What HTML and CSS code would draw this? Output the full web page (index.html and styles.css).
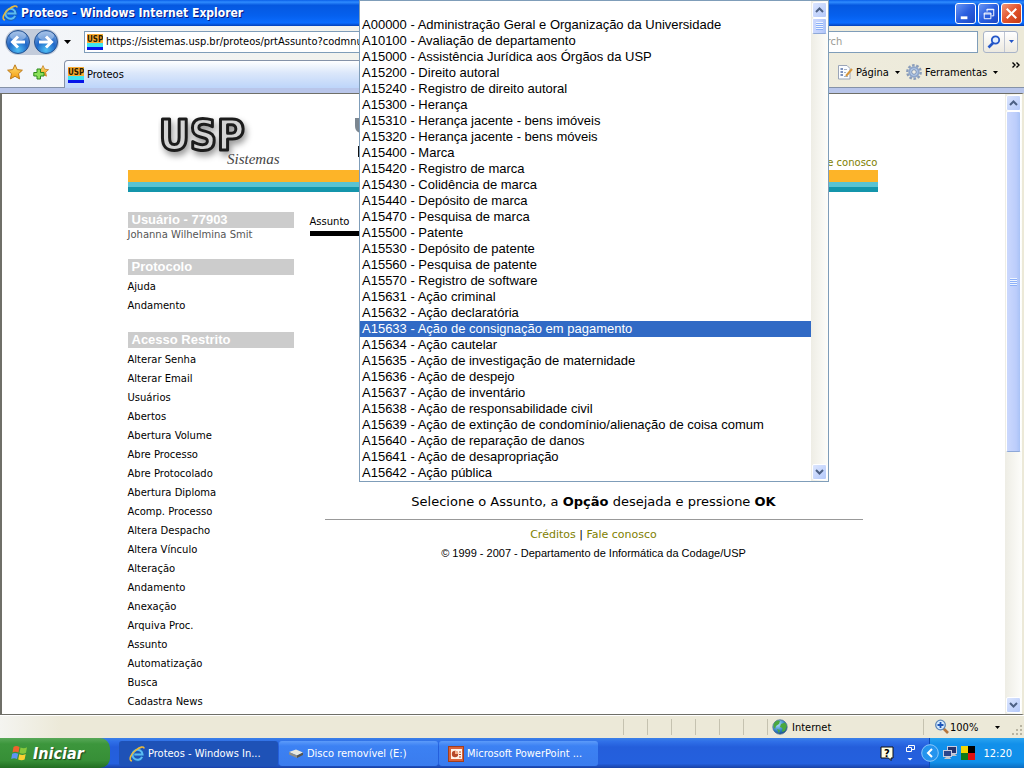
FILE: index.html
```html
<!DOCTYPE html>
<html lang="pt-BR">
<head>
<meta charset="utf-8">
<title>Proteos - Windows Internet Explorer</title>
<link rel="stylesheet" href="styles.css">
</head>
<body>
<svg class="defs" width="0" height="0" aria-hidden="true">
  <defs>
    <radialGradient id="orb" cx="50%" cy="85%" r="85%"><stop offset="0" stop-color="#4fc0f5"/><stop offset=".5" stop-color="#2068c8"/><stop offset="1" stop-color="#7da6dc"/></radialGradient>
    <linearGradient id="gold" x1="0" y1="0" x2="0" y2="1"><stop offset="0" stop-color="#ffe27a"/><stop offset="1" stop-color="#f49a0c"/></linearGradient>
    <radialGradient id="sea" cx="35%" cy="30%" r="80%"><stop offset="0" stop-color="#b5e4fb"/><stop offset=".6" stop-color="#2f80c8"/><stop offset="1" stop-color="#123e78"/></radialGradient>
    <symbol id="ie" viewBox="0 0 16 16">
      <path d="M13.3 10.8A5.2 5.2 0 1 1 13.6 8.6H5.3" fill="none" stroke="#1b5fb8" stroke-width="3.4"/>
      <path d="M13.1 10.8A5 5 0 1 1 13.5 8.4H5.3" fill="none" stroke="#5bbcf2" stroke-width="2"/>
      <path d="M3 15C-1 14 2 8 7 4C11 .8 15 0 15 2.6" fill="none" stroke="#e9b93c" stroke-width="1.6"/>
    </symbol>
    <symbol id="usp" viewBox="0 0 16 16">
      <rect width="16" height="9" fill="#fbac32"/><rect y="9" width="16" height="4" fill="#3fe4f0"/><rect y="13" width="16" height="3" fill="#0614e8"/>
      <text x="0" y="8" class="fav-text">USP</text>
    </symbol>
    <symbol id="star" viewBox="0 0 16 16"><path d="M8 .8L10.2 5.6L15.4 6.2L11.5 9.7L12.6 14.9L8 12.3L3.4 14.9L4.5 9.7L.6 6.2L5.8 5.6Z" fill="url(#gold)" stroke="#bd7a1c"/></symbol>
  </defs>
</svg>

<div class="desktop">
  <header class="titlebar">
    <svg class="i16" viewBox="0 0 16 16"><use href="#ie"/></svg>
    <h1>Proteos - Windows Internet Explorer</h1>
    <div class="caption-buttons">
      <button aria-label="Minimizar"><svg viewBox="0 0 20 20"><path d="M5 14.5H12" stroke="#fff" stroke-width="3"/></svg></button>
      <button aria-label="Restaurar"><svg viewBox="0 0 20 20" fill="none" stroke="#fff"><path d="M8.5 8V5.5H15.5V12.5H13M8 6H16"/><path d="M5.500 9.500H12.500V15.500H5.500ZM5 10.500H13"/></svg></button>
      <button class="close" aria-label="Fechar"><svg viewBox="0 0 20 20"><path d="M5 5L15 15M15 5L5 15" stroke="#fff" stroke-width="2.200"/></svg></button>
    </div>
  </header>

  <nav class="navbar">
    <div class="history">
      <button aria-label="Voltar"><svg viewBox="0 0 26 26"><circle cx="13" cy="13" r="11.500" fill="url(#orb)" stroke="#27528f"/><ellipse cx="13" cy="7" rx="8" ry="4.500" fill="#fff" opacity=".35"/><path d="M20 13H8M13 7.500L7.500 13L13 18.500" fill="none" stroke="#fff" stroke-width="3"/></svg></button>
      <button aria-label="Avançar"><svg viewBox="0 0 26 26"><circle cx="13" cy="13" r="11.500" fill="url(#orb)" stroke="#27528f"/><ellipse cx="13" cy="7" rx="8" ry="4.500" fill="#fff" opacity=".35"/><path d="M6 13H18M13 7.500L18.500 13L13 18.500" fill="none" stroke="#fff" stroke-width="3"/></svg></button>
    </div>
    <button class="caret" aria-label="Páginas recentes"><svg viewBox="0 0 7 4"><path d="M0 0H7L3.500 4Z"/></svg></button>
    <div class="address">
      <svg class="i16" viewBox="0 0 16 16"><use href="#usp"/></svg>
      <input type="text" aria-label="Endereço" value="https://sistemas.usp.br/proteos/prtAssunto?codmnu">
    </div>
    <input class="search" type="text" aria-label="Pesquisar" placeholder="Live Search">
    <div class="search-buttons">
      <button aria-label="Pesquisar"><svg width="14" height="14" viewBox="0 0 14 14" fill="none" stroke="#2456c8"><circle cx="8.500" cy="5" r="3.700" stroke-width="1.800" fill="#e4f0ff"/><path d="M6 8L1.500 12.500" stroke-width="2.600"/></svg></button>
      <button aria-label="Opções de pesquisa"><svg width="5" height="3" viewBox="0 0 5 3"><path d="M0 0H5L2.500 3Z" fill="#2456c8"/></svg></button>
    </div>
  </nav>

  <div class="tabbar">
    <div class="favorites">
      <button aria-label="Favoritos"><svg class="i16" viewBox="0 0 16 16"><use href="#star"/></svg></button>
      <button aria-label="Adicionar a Favoritos"><svg class="i16" viewBox="0 0 16 16"><svg x="4" width="12" height="14"><use href="#star" width="12" height="14"/></svg><path d="M4 5H7.500V8.500H11V12H7.500V15H4V12H.8V8.500H4Z" fill="#8be05a" stroke="#2c8a1c"/></svg></button>
    </div>
    <button class="tab"><svg class="i16" viewBox="0 0 16 16"><use href="#usp"/></svg>Proteos</button>
    <div class="commands">
      <button><svg class="i16" viewBox="0 0 16 16"><path d="M1.500 1.500H10L13 4.500V15H1.500Z" fill="#fafcff" stroke="#9aa5b8"/><path d="M3.500 5H6M3.500 8H6M3.500 11H6" stroke="#546fa8" stroke-width="1.500"/><path d="M7 5.500H10M7 8.500H9M7 12.500H11" stroke="#a5b2c8"/><path d="M15 5L9 12" stroke="#d6953a" stroke-width="2"/></svg>Página<svg class="arrow" viewBox="0 0 5 3"><path d="M0 0H5L2.500 3Z"/></svg></button>
      <button><svg class="i16" viewBox="0 0 16 16"><circle cx="8" cy="8" r="6.700" fill="none" stroke="#8a9dba" stroke-width="2.400" stroke-dasharray="2.600 1.600"/><circle cx="8" cy="8" r="4.700" fill="#b5ccec" stroke="#8fa6ca" stroke-width="2"/><circle cx="8" cy="8" r="2.300" fill="#f0eee4" stroke="#7b90b2"/></svg>Ferramentas<svg class="arrow" viewBox="0 0 5 3"><path d="M0 0H5L2.500 3Z"/></svg></button>
      <button class="more" aria-label="Mais comandos"><svg width="8" height="6" viewBox="0 0 8 6"><path d="M.5 .5L3 3L.5 5.500M4.500 .5L7 3L4.500 5.500" fill="none" stroke="#000" stroke-width="1.400"/></svg></button>
    </div>
  </div>

  <div class="viewport">
    <main class="page">
      <div class="site">
        <div class="site-header">
          <svg class="logo" width="240" height="76" viewBox="0 0 240 76" role="img" aria-label="USP Sistemas">
            <text class="logo-usp" x="1" y="56">USP</text>
            <text class="logo-sub" x="69" y="70">Sistemas</text>
            <path d="M197 24H204V40L200 38Q197 36 197 32Z" fill="#7b8690"/><rect x="200" y="52" width="4" height="11" fill="#111"/>
          </svg>
          <a class="contact" href="#fale">Fale conosco</a>
        </div>
        <div class="stripes"></div>
        <div class="columns">
          <aside>
            <section><h2>Usuário - 77903</h2><p>Johanna Wilhelmina Smit</p></section>
            <section><h2>Protocolo</h2>
              <ul><li><a href="#a">Ajuda</a></li><li><a href="#a">Andamento</a></li></ul></section>
            <section><h2>Acesso Restrito</h2>
              <ul>
                <li><a href="#a">Alterar Senha</a></li><li><a href="#a">Alterar Email</a></li><li><a href="#a">Usuários</a></li><li><a href="#a">Abertos</a></li><li><a href="#a">Abertura Volume</a></li><li><a href="#a">Abre Processo</a></li><li><a href="#a">Abre Protocolado</a></li><li><a href="#a">Abertura Diploma</a></li><li><a href="#a">Acomp. Processo</a></li><li><a href="#a">Altera Despacho</a></li><li><a href="#a">Altera Vínculo</a></li><li><a href="#a">Alteração</a></li><li><a href="#a">Andamento</a></li><li><a href="#a">Anexação</a></li><li><a href="#a">Arquiva Proc.</a></li><li><a href="#a">Assunto</a></li><li><a href="#a">Automatização</a></li><li><a href="#a">Busca</a></li><li><a href="#a">Cadastra News</a></li>
              </ul></section>
          </aside>
          <div class="content">
            <label class="field-title" for="assunto">Assunto</label>
            <p class="hint">Selecione o Assunto, a <b>Opção</b> desejada e pressione <b>OK</b></p>
            <footer>
              <div class="links"><a href="#c">Créditos</a> | <a href="#fale">Fale conosco</a></div>
              <div class="copy">© 1999 - 2007 - Departamento de Informática da Codage/USP</div>
            </footer>
          </div>
        </div>
      </div>
    </main>
    <div class="scrollbar page-scroll" aria-hidden="true">
      <span class="sb-btn"><svg viewBox="0 0 9 6"><path d="M1 5L4.500 1.500L8 5"/></svg></span>
      <span class="sb-thumb"><i></i></span>
      <span class="sb-track"></span>
      <span class="sb-btn"><svg viewBox="0 0 9 6"><path d="M1 1L4.500 4.500L8 1"/></svg></span>
    </div>
  </div>

  <div class="statusbar">
    <span></span><span></span><span></span><span></span><span></span><span></span>
    <div class="zone"><svg class="i16" viewBox="0 0 16 16"><circle cx="8" cy="8" r="7.200" fill="url(#sea)" stroke="#4b6f96" stroke-width=".8"/><path d="M3 3Q6 .8 8 2L7 5L4 7L3 10Q1 8 1.500 5.500ZM9 5L13 3.500L15 7L13 12L10 13L10.500 9L8 8ZM5 10L8 11L7 14.500Z" fill="#49a83e"/></svg>Internet</div>
    <button class="zoom"><svg class="i16" viewBox="0 0 16 16"><path d="M9 9L14 14" stroke="#b5763c" stroke-width="2.600"/><circle cx="6.500" cy="6" r="4.800" fill="#d7ecff" stroke="#5d86b8" stroke-width="1.300"/><path d="M6.500 3V9M3.500 6H9.500" stroke="#1d55b8" stroke-width="1.800"/></svg><b>100%</b><svg class="arrow" viewBox="0 0 5 3"><path d="M0 0H5L2.500 3Z"/></svg></button>
    <svg class="grip" viewBox="0 0 12 12" fill="#b8b4a2"><path d="M9 1h2v2h-2zM9 5h2v2h-2zM5 5h2v2h-2zM9 9h2v2h-2zM5 9h2v2h-2zM1 9h2v2h-2z"/></svg>
  </div>

  <footer class="taskbar">
    <button class="start"><svg width="20" height="20" viewBox="0 0 20 20"><path d="M3.500 4Q6 2 9.500 4L8.500 9.500Q5 7.800 2.500 9.500Z" fill="#f0622d"/><path d="M10.500 4.500Q14 6 17 4.200L16 9.800Q13 11.500 9.500 10Z" fill="#86c83c"/><path d="M2.200 10.800Q5 9 8.200 10.800L7 16Q4 14.400 1.200 16Z" fill="#5d94f4"/><path d="M9.300 11.200Q12.500 12.800 15.700 11L14.600 16.500Q11.500 18 8.200 16.400Z" fill="#fbd032"/></svg>Iniciar</button>
    <div class="tasks">
      <button class="task active"><svg class="i16" viewBox="0 0 16 16"><use href="#ie"/></svg><span>Proteos - Windows In...</span></button>
      <button class="task"><svg class="i16" viewBox="0 0 16 16"><path d="M1 6L8 3.500L15 6.500L9 9.500Z" fill="#e8e8e0"/><path d="M1 6L9 9.500V12L1 8.500Z" fill="#8e8e88"/><path d="M9 9.500L15 6.500V9L9 12Z" fill="#55554f"/></svg><span>Disco removível (E:)</span></button>
      <button class="task"><svg class="i16" viewBox="0 0 16 16"><rect x=".5" y=".5" width="15" height="15" fill="#d9633b" stroke="#a33d1c"/><rect x="3" y="3" width="11" height="10" fill="#fff3ea"/><circle cx="7" cy="8" r="3.200" fill="#b5482a"/><path d="M7 8V4.800A3.200 3.200 0 0 1 10.200 8Z" fill="#f5b08c"/><path d="M11 6H13M11 8.500H13M11 11H13" stroke="#b5482a"/></svg><span>Microsoft PowerPoint ...</span></button>
    </div>
    <div class="langbar">
      <svg width="14" height="15" viewBox="0 0 14 15"><path d="M1 1H13V12H11V14.500L8.500 12H1Z" fill="#ffffe6" stroke="#111"/><text x="4" y="11" class="help-text">?</text></svg>
      <svg width="10" height="17" viewBox="0 0 10 17" fill="none" stroke="#fff"><path d="M3.500 2.500V.5H9.500V4.500H7"/><path d="M1.500 2.500H6.500V6.500H1.500Z"/><path d="M2.500 13H7.500L5 15.500Z" fill="#fff" stroke="none"/></svg>
    </div>
    <div class="tray">
      <button class="expand" aria-label="Mostrar ícones ocultos"><svg width="18" height="18" viewBox="0 0 18 18"><circle cx="9" cy="9" r="8.300" fill="#2494ee" stroke="#8cc8fa"/><path d="M11 5L7 9L11 13" fill="none" stroke="#fff" stroke-width="2"/></svg></button>
      <svg class="i16" viewBox="0 0 16 16"><g stroke="#c8cce0"><rect x="5.500" y="1.500" width="9" height="7" fill="#24346e"/><rect x="1.500" y="5.500" width="8" height="6" fill="#2c458c"/></g><path d="M2 14H9L8 12H4ZM10 11H15L13 9H10Z" fill="#c0c4cc"/></svg>
      <svg width="14" height="14" viewBox="0 0 14 14"><rect width="7" height="7" fill="#f4d500"/><rect x="7" width="7" height="7" fill="#000"/><rect y="7" width="7" height="7" fill="#107a18"/><rect x="7" y="7" width="7" height="7" fill="#e01010"/></svg>
      <time>12:20</time>
    </div>
  </footer>
</div>

<div class="dropdown">
  <select id="assunto" size="30">
    <option></option>
    <option>A00000 - Administração Geral e Organização da Universidade</option>
    <option>A10100 - Avaliação de departamento</option>
    <option>A15000 - Assistência Jurídica aos Órgãos da USP</option>
    <option>A15200 - Direito autoral</option>
    <option>A15240 - Registro de direito autoral</option>
    <option>A15300 - Herança</option>
    <option>A15310 - Herança jacente - bens imóveis</option>
    <option>A15320 - Herança jacente - bens móveis</option>
    <option>A15400 - Marca</option>
    <option>A15420 - Registro de marca</option>
    <option>A15430 - Colidência de marca</option>
    <option>A15440 - Depósito de marca</option>
    <option>A15470 - Pesquisa de marca</option>
    <option>A15500 - Patente</option>
    <option>A15530 - Depósito de patente</option>
    <option>A15560 - Pesquisa de patente</option>
    <option>A15570 - Registro de software</option>
    <option>A15631 - Ação criminal</option>
    <option>A15632 - Ação declaratória</option>
    <option selected>A15633 - Ação de consignação em pagamento</option>
    <option>A15634 - Ação cautelar</option>
    <option>A15635 - Ação de investigação de maternidade</option>
    <option>A15636 - Ação de despejo</option>
    <option>A15637 - Ação de inventário</option>
    <option>A15638 - Ação de responsabilidade civil</option>
    <option>A15639 - Ação de extinção de condomínio/alienação de coisa comum</option>
    <option>A15640 - Ação de reparação de danos</option>
    <option>A15641 - Ação de desapropriação</option>
    <option>A15642 - Ação pública</option>
  </select>
  <div class="scrollbar" aria-hidden="true">
    <span class="sb-btn"><svg viewBox="0 0 9 6"><path d="M1 5L4.500 1.500L8 5"/></svg></span>
    <span class="sb-thumb small"><i></i></span>
    <span class="sb-track"></span>
    <span class="sb-btn"><svg viewBox="0 0 9 6"><path d="M1 1L4.500 4.500L8 1"/></svg></span>
  </div>
</div>
</body>
</html>
```
FILE: styles.css
```css
* { box-sizing: border-box; }
body { margin: 0; font: 11px "DejaVu Sans Condensed", "DejaVu Sans", sans-serif; color: #000; }
h1, h2, p, ul { margin: 0; padding: 0; }
ul { list-style: none; }
a { color: inherit; text-decoration: none; }
button { font: inherit; color: inherit; padding: 0; border: 0; background: none; }
svg { display: block; flex: none; }
.defs { position: absolute; }
.i16 { width: 16px; height: 16px; }
.arrow { width: 5px; height: 3px; }
.fav-text { font: bold 8px "DejaVu Sans Condensed", sans-serif; fill: #2a1a00; }
.help-text { font: bold 11px "DejaVu Sans Condensed", sans-serif; fill: #000; }

.desktop { display: flex; flex-direction: column; height: 100vh; overflow: hidden; }

.titlebar { display: flex; align-items: center; gap: 3px; height: 26px; padding: 0 2px; background: linear-gradient(#0a5fe8, #2f8cff 8%, #0558e0 20%, #0560ee 60%, #0a6cff 88%, #0340b8); }
.titlebar h1 { font: bold 12px "DejaVu Sans Condensed", sans-serif; color: #fff; text-shadow: 1px 1px #0a1883; }
.caption-buttons { display: flex; gap: 2px; margin-left: auto; }
.caption-buttons button { width: 21px; height: 21px; border: 1px solid #fff; border-radius: 3px; background: linear-gradient(135deg, #6a96f4, #2a5fe0 50%, #1d48c4); }
.caption-buttons .close { background: linear-gradient(135deg, #f0977a, #e2532c 50%, #c43a14); }

.navbar { display: flex; align-items: center; height: 31px; padding: 0 6px 0 5px; background: linear-gradient(90deg, #f3f6fb, #f1efe3 60%, #ece9d8); }
.history { display: flex; gap: 2px; background: #c3ccdb; border-radius: 13px; }
.history svg { width: 26px; height: 26px; }
.caret { margin: 0 13px 0 5px; }
.caret svg { width: 7px; height: 4px; }
.address { display: flex; align-items: center; gap: 3px; flex: 1; height: 22px; padding-left: 2px; border: 1px solid #7f9db9; background: #fff; }
.address input { flex: 1; min-width: 0; border: 0; padding: 0; font: inherit; outline: 0; }
.search { width: 196px; height: 22px; margin-left: 6px; padding: 0 2px; border: 1px solid #7f9db9; background: #fff; font: inherit; }
.search::placeholder { color: #9a9a94; }
.search-buttons { display: flex; height: 22px; margin-left: 5px; border: 1px solid #a9b4c8; border-radius: 3px; background: linear-gradient(#fff, #ece9e0); }
.search-buttons button { display: grid; place-items: center; width: 20px; }
.search-buttons button + button { width: 13px; border-left: 1px solid #c0c6d2; }

.tabbar { display: flex; height: 36px; border-bottom: 5px solid #b9c6ea; background: linear-gradient(90deg, #f3f6fb, #f1efe3 60%, #ece9d8); }
.favorites { display: flex; align-items: center; gap: 10px; width: 64px; padding-left: 7px; border-bottom: 1px solid #8592a8; }
.tab { display: flex; align-items: center; gap: 3px; flex: 1; margin: 3px 0 0; padding-left: 3px; border: 1px solid #8592a8; border-bottom: 0; border-radius: 4px 4px 0 0; background: linear-gradient(#fff, #dbe7fa 45%, #bdd5fa); text-align: left; }
.commands { display: flex; align-items: center; gap: 6px; width: 196px; padding-left: 9px; border-bottom: 1px solid #8592a8; }
.commands button { display: flex; align-items: center; gap: 3px; white-space: nowrap; }
.commands .arrow { margin-left: 3px; }
.commands .more { margin: 0 4px 14px auto; }

.viewport { display: flex; flex: 1; min-height: 0; border: 1px solid #6f6f68; border-width: 1px 2px 1px 2px; border-right-color: #ece9d8; background: #fff; }
.page { flex: 1; padding-right: 2px; overflow: hidden; }
.site { max-width: 750px; margin: 0 auto; font-family: "DejaVu Sans", sans-serif; }
.site-header { display: flex; justify-content: space-between; align-items: flex-end; height: 76px; }
.logo { margin: 0 0 0 30px; }
.logo-usp { font: bold 42px "DejaVu Sans Condensed", sans-serif; fill: #d4d4d4; stroke: #1c1c1c; stroke-width: 3px; stroke-linejoin: round; filter: drop-shadow(2px 4px 3px rgba(0, 0, 0, .4)); }
.logo-sub { font: italic 15px "Liberation Serif", serif; fill: #444; }
.contact { font-size: 10px; line-height: 14px; color: #808000; }
.stripes { height: 22px; background: linear-gradient(#fdb428 12px, #5ac3d2 12px 17px, #1495ab 17px); }
.columns { display: flex; gap: 16px; padding-top: 20px; }
aside { display: flex; flex-direction: column; gap: 17px; width: 166px; flex: none; font-size: 10px; }
aside h2 { height: 16px; padding-left: 4px; background: #ccc; color: #fff; font: bold 13px/16px "Liberation Sans", sans-serif; }
aside p { line-height: 14px; color: #555; white-space: nowrap; }
aside ul { padding-top: 2px; }
aside li { line-height: 19px; }
.content { flex: 1; text-align: center; }
.field-title { display: block; width: 80%; height: 24px; border-bottom: 5px solid #000; font-size: 10px; line-height: 20px; text-align: left; }
.hint { margin-top: 257px; font-size: 13px; line-height: 18px; }
footer .links, footer .copy { line-height: 18px; }
.content footer { margin: 8px 15px 0; padding-top: 6px; border-top: 1px solid #999; }
.links { font-size: 11px; }
.links a { color: #808000; }
.copy { font-family: "Liberation Sans", sans-serif; font-size: 11px; }

.scrollbar { display: flex; flex-direction: column; width: 17px; padding: 1px; background: linear-gradient(90deg, #eeede5, #fdfdfa); }
.sb-btn { display: grid; place-items: center; height: 16px; flex: none; border: 1px solid #fff; border-radius: 2px; background: linear-gradient(135deg, #dbe5fe, #b4c9fa); }
.sb-btn svg { width: 9px; height: 6px; fill: none; stroke: #4d6185; stroke-width: 2; }
.sb-thumb { display: grid; place-items: center; flex: 340 0 0; border: 1px solid #fff; border-bottom-color: #8ea8d8; border-radius: 2px; background: linear-gradient(90deg, #cbd8fd, #bccdfb 70%, #a9c2f6); }
.sb-thumb.small { flex: none; height: 16px; }
.sb-thumb i { width: 7px; height: 8px; background: repeating-linear-gradient(#eef4fe 0 1px, #8cb0f8 1px 2px); }
.sb-track { flex: 245 0 0; }

.statusbar { display: flex; align-items: stretch; height: 23px; padding: 3px 0; border-top: 1px solid #fff; background: linear-gradient(90deg, #f4f4f0, #ece9d8 6%, #ece9d8); }
.statusbar > span { width: 24px; border-left: 1px solid #c5c2b0; }
.statusbar > span:first-child { margin-left: auto; }
.zone { display: flex; align-items: center; gap: 4px; width: 156px; padding-left: 4px; border-left: 1px solid #c5c2b0; }
.zoom { display: flex; align-items: center; width: 77px; padding-left: 10px; border-left: 1px solid #c5c2b0; }
.zoom b { font-weight: normal; }
.zoom .arrow { margin-left: auto; }
.grip { width: 12px; height: 12px; margin: 5px 1px 0 11px; }

.taskbar { display: flex; height: 30px; color: #fff; background: linear-gradient(#3a80e8, #2f6fe8 12%, #245edb 30%, #2460de 85%, #1941a5); }
.start { display: flex; align-items: center; gap: 3px; width: 110px; padding-left: 10px; border-radius: 0 10px 10px 0; background: linear-gradient(#58a858, #3c963c 20%, #378f37 75%, #226e22); font: italic bold 16px "DejaVu Sans Condensed", sans-serif; text-shadow: 1px 1px 1px #1a421a; }
.tasks { display: flex; gap: 1px; flex: 1; margin-left: 9px; padding: 3px 0 2px; }
.task { display: flex; align-items: center; gap: 3px; width: 159px; padding-left: 9px; border-radius: 3px; background: linear-gradient(#5c9bfa, #3c81f3 20%, #3a7cee); white-space: nowrap; }
.task.active { background: #1e52b7; padding-left: 10px; }
.langbar { display: flex; align-items: center; gap: 11px; margin-right: 14px; }
.tray { display: flex; align-items: center; gap: 3px; padding-right: 12px; border-left: 1px solid #0a4ab8; background: linear-gradient(#2aa4f0, #1290ea 20%, #1090ea 80%, #0c6cc0); }
.expand { margin-left: -9px; }
.tray time { margin-left: 5px; }

/* Open list of the "Assunto" field, over the window chrome */
.dropdown { position: absolute; left: 359px; top: 0; display: flex; width: 470px; border: 1px solid #7f9db9; background: #fff; }
.dropdown select { flex: 1; min-width: 0; border: 0; border-radius: 0; padding: 0; outline: 0; overflow: hidden; scrollbar-width: none; background: #fff; color: #000; font: 13px "Liberation Sans", sans-serif; }
.dropdown option { height: 16px; min-height: 16px; padding: 0 2px; line-height: 16px; color: #000; }
.dropdown option:checked { background: #316ac5 linear-gradient(#316ac5, #316ac5); color: #fff; }
```
